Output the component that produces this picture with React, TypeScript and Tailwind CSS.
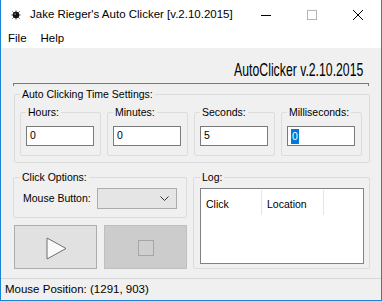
import type { ReactNode } from 'react';

const ui = { fontFamily: '"Liberation Sans", Arial, sans-serif' };

function Group({ label, className, children }: { label: string; className: string; children: ReactNode }) {
  return (
    <fieldset className={`border border-[#dcdcdc] rounded-[2px] ${className}`}>
      <legend className="px-[2px] text-[10.5px] leading-[12px] text-black">{label}</legend>
      {children}
    </fieldset>
  );
}

function TimeBox({ label, value, selected }: { label: string; value: string; selected?: boolean }) {
  return (
    <Group label={label} className="w-[81px] mt-[6px] pl-[5px] pb-[9px]">
      <div className="mt-[8px] w-[68px] h-[20px] border border-[#7a7a7a] bg-white flex items-center pl-[3px] text-[10.5px]">
        {selected ? <span className="bg-[#0078d7] text-white px-[1px] leading-[15px]">{value}</span> : <span>{value}</span>}
      </div>
    </Group>
  );
}

export default function App() {
  return (
    <div className="w-[382px] h-[301px] bg-white border-l border-r border-b border-[#1883d7] flex flex-col text-black" style={ui}>
      {/* title bar */}
      <div className="h-[30px] flex items-center shrink-0">
        <svg className="ml-[10px]" width="10" height="10" viewBox="0 0 10 10">
          <circle cx="5" cy="5" r="3.2" fill="#111" />
          <path d="M5 0.5V2M5 8V9.5M0.5 5H2M8 5H9.5M1.5 1.5L2.7 2.7M7.3 7.3L8.5 8.5M8.5 1.5L7.3 2.7M2.7 7.3L1.5 8.5" stroke="#333" strokeWidth="1" />
          <circle cx="4.2" cy="4.2" r="0.9" fill="#777" />
        </svg>
        <span className="ml-[9px] text-[11.5px]">Jake Rieger's Auto Clicker [v.2.10.2015]</span>
        <div className="ml-auto flex h-full">
          <div className="w-[46px] flex items-center justify-center">
            <div className="w-[10px] h-px bg-black" />
          </div>
          <div className="w-[46px] flex items-center justify-center">
            <div className="w-[10px] h-[10px] border border-[#b4b4b4]" />
          </div>
          <div className="w-[46px] flex items-center justify-center">
            <svg width="10" height="10" viewBox="0 0 10 10">
              <path d="M0 0L10 10M10 0L0 10" stroke="#000" strokeWidth="1" />
            </svg>
          </div>
        </div>
      </div>

      {/* menu */}
      <div className="h-[18px] flex items-center text-[11.5px] shrink-0">
        <span className="ml-[7px]">File</span>
        <span className="ml-[14px]">Help</span>
      </div>

      {/* form body */}
      <div className="flex-1 bg-[#f0f0f0] flex flex-col">
        <div className="h-[35px] pt-[11px] pr-[18px] text-right">
          <span className="inline-block origin-right scale-x-[0.645] text-[19px] leading-[20px] whitespace-nowrap">AutoClicker v.2.10.2015</span>
        </div>
        <div className="ml-[12px] w-[356px] h-[3px] border-t border-l border-r border-[#7a7a7a]" />

        <Group label="Auto Clicking Time Settings:" className="ml-[13px] mt-[2px] w-[356px] pl-[5px] pb-[6px]">
          <div className="flex gap-[6px]">
            <TimeBox label="Hours:" value="0" />
            <TimeBox label="Minutes:" value="0" />
            <TimeBox label="Seconds:" value="5" />
            <TimeBox label="Milliseconds:" value="0" selected />
          </div>
        </Group>

        <div className="flex mt-[8px] ml-[12px] gap-[6px]">
          <div className="w-[174px] flex flex-col">
            <Group label="Click Options:" className="pl-[6px] pb-[8px]">
              <div className="mt-[5px] flex items-center">
                <span className="ml-[3px] text-[10.5px]">Mouse Button:</span>
                <div className="ml-[6px] w-[80px] h-[21px] bg-[#e5e5e5] border border-[#acacac] flex items-center justify-end pr-[7px]">
                  <svg width="9" height="5" viewBox="0 0 9 5">
                    <path d="M0.5 0.5L4.5 4.5L8.5 0.5" stroke="#333" strokeWidth="1" fill="none" />
                  </svg>
                </div>
              </div>
            </Group>
            <div className="mt-[7px] ml-[1px] flex gap-[7px]">
              <div className="w-[83px] h-[44px] bg-[#e1e1e1] border border-[#adadad] flex items-center justify-center">
                <svg className="mt-[2px] ml-[2px]" width="21" height="23" viewBox="0 0 21 23">
                  <path d="M1 1L20 11.5L1 22Z" fill="#fafafa" stroke="#6e6e6e" strokeWidth="1" />
                </svg>
              </div>
              <div className="w-[83px] h-[44px] bg-[#cccccc] border border-[#bfbfbf] flex items-center justify-center">
                <div className="mt-[2px] w-[16px] h-[16px] bg-[#cfcfcf] border border-[#a6a6a6]" />
              </div>
            </div>
          </div>

          <Group label="Log:" className="w-[177px] pl-[6px] pr-[5px] pb-[4px]">
            <div className="mt-[5px] w-[164px] h-[76px] bg-white border border-[#828282]">
              <div className="flex h-[25px] text-[10.5px] mt-[1px]">
                <div className="w-[61px] pl-[5px] pt-[7px] border-r border-[#e5e5e5]">Click</div>
                <div className="w-[62px] pl-[5px] pt-[7px] border-r border-[#e5e5e5]">Location</div>
              </div>
            </div>
          </Group>
        </div>

        <div className="mt-auto h-[22px] border-t border-[#d7d7d7] flex items-center pl-[4px] text-[11.5px]">
          Mouse Position: (1291, 903)
        </div>
      </div>
    </div>
  );
}
